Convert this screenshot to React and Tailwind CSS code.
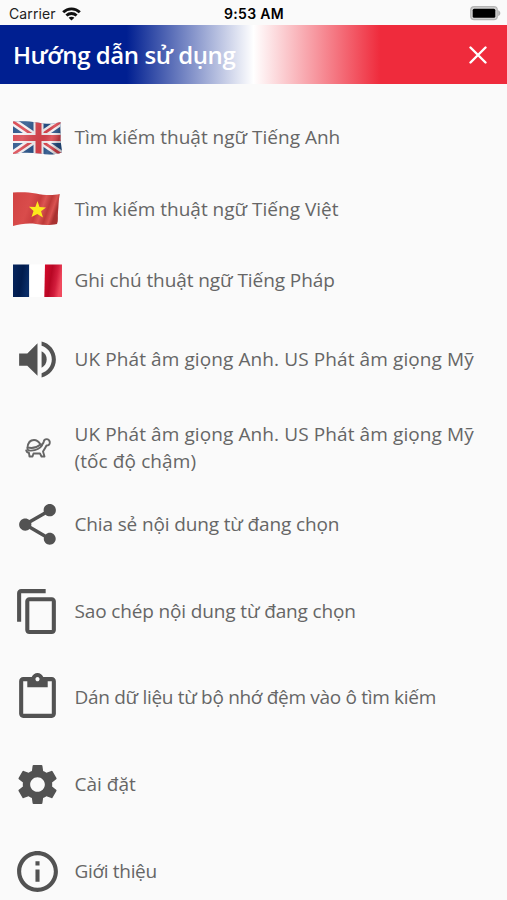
import React from "react";
import {
  MdVolumeUp,
  MdShare,
  MdContentCopy,
  MdContentPaste,
  MdSettings,
  MdInfoOutline,
} from "react-icons/md";

const UkFlag = () => (
  <svg width="50" height="34" viewBox="0 0 50 34">
    <defs>
      <clipPath id="ukWave">
        <path d="M1 0.500C10 0 17 0 25 1.500C34 3 41 3.500 48.500 1C48 9 49 13 48.500 18C49 24 49.800 27 50 31.500C42 34 36 34 28 32.500C19 31.500 9 31.500 1 33Z" />
      </clipPath>
      <linearGradient id="ukShade" x1="0" x2="1" y1="0" y2="0.2">
        <stop offset="0" stopColor="#fff" stopOpacity="0.05" />
        <stop offset="0.3" stopColor="#fff" stopOpacity="0.15" />
        <stop offset="0.7" stopColor="#000" stopOpacity="0.05" />
        <stop offset="0.85" stopColor="#fff" stopOpacity="0.12" />
        <stop offset="1" stopColor="#000" stopOpacity="0.2" />
      </linearGradient>
    </defs>
    <g clipPath="url(#ukWave)">
      <rect width="50" height="34" fill="#255087" />
      <path d="M0 0L50 34M50 0L0 34" stroke="#f4eff1" strokeWidth="7.500" />
      <path d="M0 0L50 34M50 0L0 34" stroke="#d9424b" strokeWidth="2.800" />
      <path d="M26.500 0V34M0 17H50" stroke="#f4eff1" strokeWidth="10" />
      <path d="M26.500 0V34M0 17H50" stroke="#d9424b" strokeWidth="6" />
      <rect width="50" height="34" fill="url(#ukShade)" />
    </g>
  </svg>
);

const VnFlag = () => (
  <svg width="50" height="34" viewBox="0 0 50 34">
    <defs>
      <linearGradient id="vnShade" x1="0" x2="1" y1="0" y2="0.25">
        <stop offset="0" stopColor="#d14343" />
        <stop offset="0.4" stopColor="#d94c4b" />
        <stop offset="0.6" stopColor="#c83c3c" />
        <stop offset="0.7" stopColor="#dc5552" />
        <stop offset="0.82" stopColor="#bd3938" />
        <stop offset="0.92" stopColor="#d95350" />
        <stop offset="1" stopColor="#a93231" />
      </linearGradient>
    </defs>
    <path
      d="M1 0.500C9 0 16 0 24 1.500C32 3 39 4 47.800 2C46.300 9 46.800 14 46 20C45.500 25 46.500 29 45 32C37 33.500 31 33 24 32C16 31 8 32 1 34Z"
      fill="url(#vnShade)"
    />
    <path
      d="M25.500 9L27.500 15L34 15.500L29 19.300L31 25.500L25.300 22L19.500 25L21.500 19L17 14.800L23.300 15Z"
      fill="#fce91c"
    />
  </svg>
);

const FrFlag = () => (
  <svg width="50" height="34" viewBox="0 0 50 34">
    <defs>
      <linearGradient id="frBlue" x1="0" x2="1" y1="0" y2="0.3">
        <stop offset="0" stopColor="#07265e" />
        <stop offset="0.6" stopColor="#001b4d" />
        <stop offset="1" stopColor="#092c66" />
      </linearGradient>
      <linearGradient id="frRed" x1="0" x2="1" y1="0" y2="0.3">
        <stop offset="0" stopColor="#d90a2c" />
        <stop offset="0.45" stopColor="#b80724" />
        <stop offset="0.75" stopColor="#d21d3c" />
        <stop offset="1" stopColor="#f04a5e" />
      </linearGradient>
    </defs>
    <rect x="1" y="0.500" width="16.300" height="32.500" fill="url(#frBlue)" />
    <rect x="17.300" y="0.500" width="15.500" height="32.500" fill="#fff" />
    <path d="M33 0.500H50V33H32.300Z" fill="url(#frRed)" />
  </svg>
);

const Turtle = () => (
  <svg
    className="ml-px"
    width="26"
    height="22"
    viewBox="0 0 26 22"
    fill="none"
    stroke="#666"
    strokeWidth="1.900"
    strokeLinejoin="round"
    strokeLinecap="round"
  >
    <path d="M2.500 10.500C3 5.500 5.500 3 9 3C12.500 3 14 5 15.500 7.500C12 10.500 7 11.500 2.500 10.500Z" />
    <path d="M16 8C18 7.500 18.500 6 18.800 4.500C19.200 1.500 24 1 24.800 5C25 7.500 23.500 8.500 21.500 8.500C20 11.500 19 13 18 14.500L19.500 19.500H16.500L15 16.500H8.500L7.500 19.500H4.500L4 16C2.500 15.500 1.500 15 1.200 13.500" />
    <path d="M2.500 11C2 13 3.500 13.800 6 13.600C11 13.200 15 11.500 17 8.500" />
  </svg>
);

const items = [
  { icon: <UkFlag />, text: "Tìm kiếm thuật ngữ Tiếng Anh", row: "h-[71.5px]", spacing: "tracking-normal" },
  { icon: <VnFlag />, text: "Tìm kiếm thuật ngữ Tiếng Việt", row: "h-[71.5px]", spacing: "tracking-normal" },
  { icon: <FrFlag />, text: "Ghi chú thuật ngữ Tiếng Pháp", row: "h-[71.5px]", spacing: "tracking-[-0.08px]" },
  { icon: <MdVolumeUp size={49} />, text: "UK Phát âm giọng Anh. US Phát âm giọng Mỹ", row: "h-[86px]", spacing: "tracking-[0.1px]" },
  { icon: <Turtle />, text: "UK Phát âm giọng Anh. US Phát âm giọng Mỹ (tốc độ chậm)", row: "mt-3 h-[67px]", spacing: "tracking-[0.1px]" },
  { icon: <MdShare size={49} />, text: "Chia sẻ nội dung từ đang chọn", row: "h-[86px]", spacing: "tracking-[-0.14px]" },
  { icon: <MdContentCopy size={49} />, text: "Sao chép nội dung từ đang chọn", row: "h-[87px]", spacing: "tracking-[-0.14px]" },
  { icon: <MdContentPaste size={49} />, text: "Dán dữ liệu từ bộ nhớ đệm vào ô tìm kiếm", row: "h-[86px]", spacing: "tracking-[-0.31px]" },
  { icon: <MdSettings size={49} />, text: "Cài đặt", row: "h-[87px]", spacing: "tracking-normal" },
  { icon: <MdInfoOutline size={49} />, text: "Giới thiệu", row: "h-[87px]", spacing: "tracking-[-0.32px]" },
];

const StatusBar = () => (
  <div className="grid h-[25px] shrink-0 grid-cols-3 items-center pt-0.5 pr-1.5 pl-[9px] font-['Inter',sans-serif] text-[14px] text-[#222]">
    <div className="flex items-center gap-1.5">
      <span className="tracking-[0.1px]">Carrier</span>
      <svg width="19" height="14" viewBox="0 0 19 14" fill="none" stroke="#111" strokeWidth="2.800">
        <path d="M1.200 5.300C5.800 0.600 13.200 0.600 17.800 5.300" />
        <path d="M4.400 8.600C7.300 5.800 11.700 5.800 14.600 8.600" />
        <path d="M9.500 13.500L6.600 10.700C8.200 9.300 10.800 9.300 12.400 10.700Z" fill="#111" stroke="none" />
      </svg>
    </div>
    <span className="-ml-0.5 text-center font-semibold tracking-[0.3px] whitespace-nowrap text-black">9:53 AM</span>
    <svg className="justify-self-end" width="31" height="15" viewBox="0 0 31 15">
      <rect x="0.700" y="0.700" width="26.600" height="13" rx="3.500" fill="#d0d0d0" stroke="#b5b5b5" strokeWidth="1.200" />
      <rect x="2.700" y="2.700" width="22.600" height="9" rx="1.500" fill="#000" />
      <path d="M28.200 4.300C31 5.500 31 9 28.200 10.200Z" fill="#b0b0b0" />
    </svg>
  </div>
);

const App = () => {
  return (
    <div className="flex h-screen flex-col overflow-hidden bg-[#fafafa] font-['Open_Sans',sans-serif]">
      <StatusBar />

      {/* Header */}
      <header className="flex h-[59px] shrink-0 items-center justify-between bg-[linear-gradient(90deg,#001f91_0%,#001f91_25%,#ffffff_50%,#ef2b3c_75%,#ef2b3c_100%)] pr-5 pl-[13px]">
        <h1 className="text-2xl font-semibold tracking-[-0.42px] whitespace-nowrap text-white">Hướng dẫn sử dụng</h1>
        <button aria-label="Đóng">
          <svg width="18" height="18" viewBox="0 0 18 18" stroke="#fff" strokeWidth="2.400" strokeLinecap="round">
            <path d="M1.500 1.500L16.500 16.500M16.500 1.500L1.500 16.500" />
          </svg>
        </button>
      </header>

      {/* Help items */}
      <ul className="flex flex-col pt-[18px]">
        {items.map((item) => (
          <li key={item.text} className={`flex shrink-0 items-center ${item.row}`}>
            <div className="flex w-[74.5px] shrink-0 justify-center text-[#525252]">{item.icon}</div>
            <p className={`w-[412px] text-[19px] leading-[27px] text-[#666] ${item.spacing}`}>{item.text}</p>
          </li>
        ))}
      </ul>
    </div>
  );
};

export default App;
